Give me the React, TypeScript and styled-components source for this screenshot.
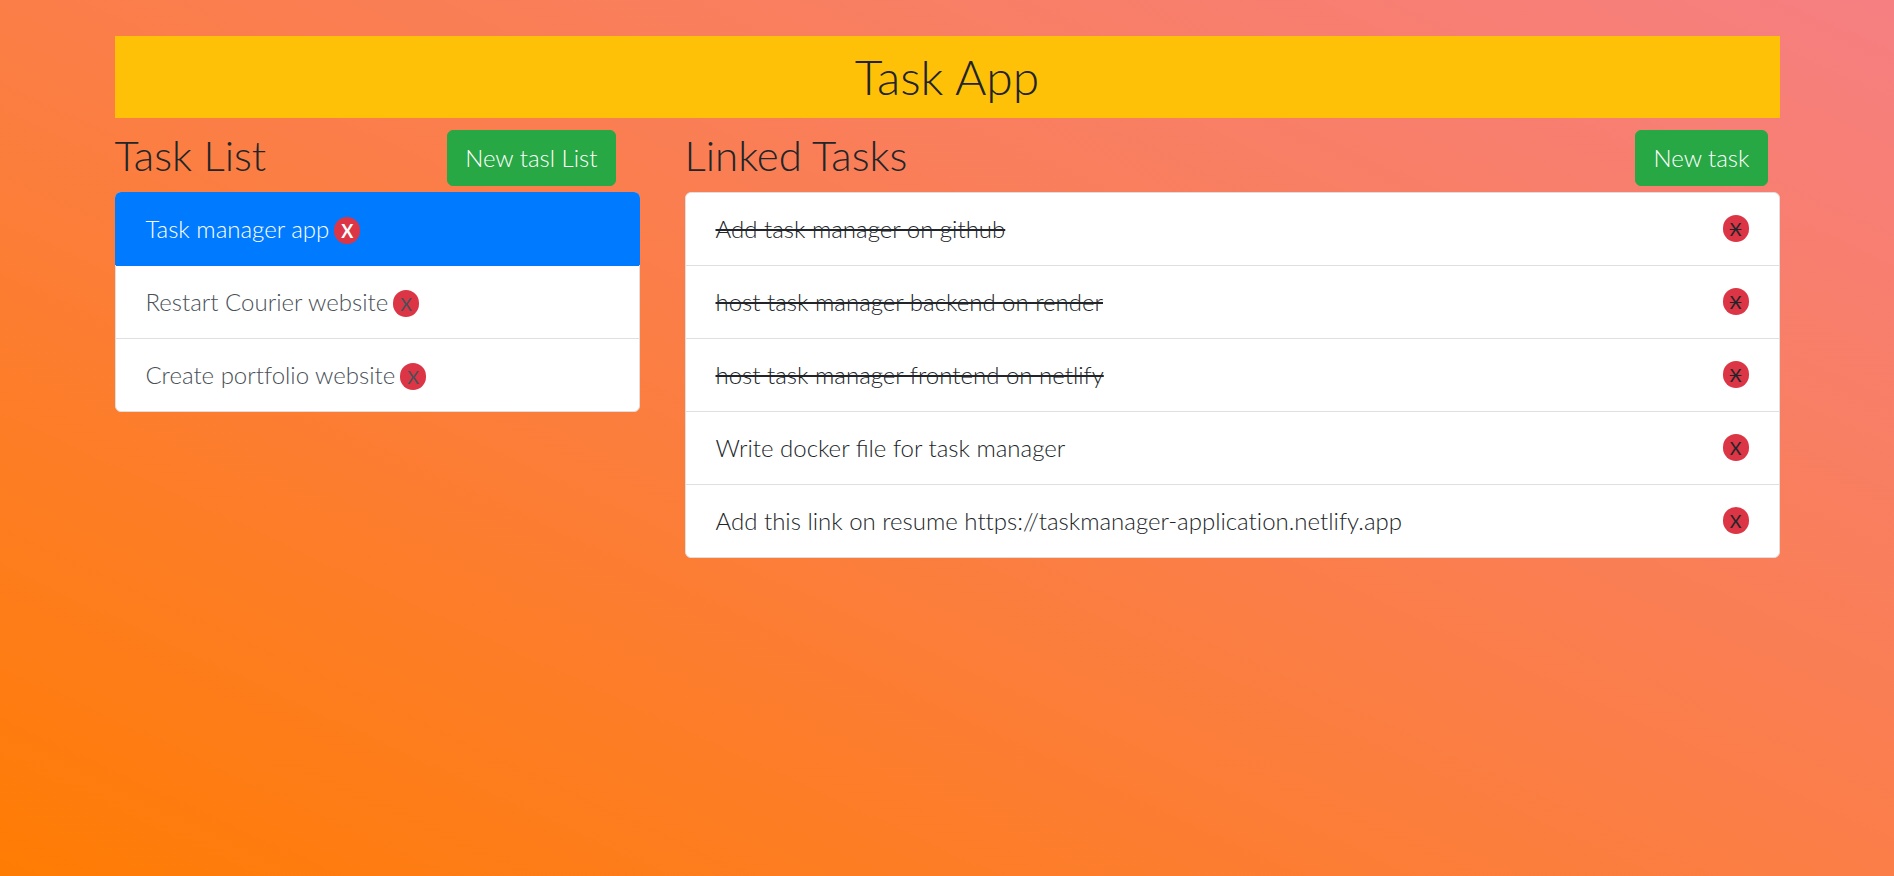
import React from "react";
import styled, { createGlobalStyle, css } from "styled-components";

const GlobalStyle = createGlobalStyle`
  *, *::before, *::after {
    box-sizing: border-box;
  }
  body {
    margin: 0;
    min-height: 100vh;
    background: linear-gradient(to right top, #ff7c03, #fb7e48, #f67f82) no-repeat;
    color: #212529;
    font-family: Lato, "Liberation Sans", sans-serif;
    font-size: 24px;
    font-weight: 300;
    line-height: 36px;
  }
`;

const Page = styled.main`
  max-width: 1709px;
  margin: 0 auto;
  padding: 36px 22px 0;
`;

const Banner = styled.header`
  padding: 12px;
  background: #ffc107;
  text-align: center;
`;

const Title = styled.h1`
  margin: 0;
  font-size: 48px;
  font-weight: 300;
  line-height: 58px;
`;

const Columns = styled.div`
  display: grid;
  grid-template-columns: repeat(12, minmax(0, 1fr));
  column-gap: 45px;
`;

const Panel = styled.section<{ $span: number }>`
  grid-column: span ${(p) => p.$span};
`;

const PanelHeader = styled.div<{ $inset: number }>`
  display: flex;
  align-items: flex-start;
  justify-content: space-between;
  padding: 12px ${(p) => p.$inset}px 6px 0;
`;

const PanelTitle = styled.h2`
  margin: 0;
  font-size: 42px;
  font-weight: 300;
  line-height: 50px;
`;

const AddButton = styled.button`
  padding: 9px 17px;
  border: 1px solid #28a745;
  border-radius: 6px;
  background: #28a745;
  color: #fff;
  font: inherit;
  cursor: pointer;
`;

const List = styled.ul`
  margin: 0;
  padding: 0;
  list-style: none;
  background: #fff;
  border: 1px solid #dfdfdf;
  border-radius: 6px;
`;

const rowBox = css`
  display: flex;
  padding: 18px 30px;
`;

const ListRow = styled.li<{ $active: boolean }>`
  ${rowBox}
  align-items: baseline;
  gap: 5px;
  color: #495057;

  & + & {
    border-top: 1px solid #dfdfdf;
  }

  ${(p) =>
    p.$active &&
    css`
      margin: -1px -1px 0;
      padding: 19px 31px 18px;
      border-radius: 6px 6px 0 0;
      background: #007bff;
      color: #fff;

      && + li {
        border-top-color: #007bff;
      }
    `}
`;

const TaskRow = styled.li`
  ${rowBox}
  align-items: flex-start;
  justify-content: space-between;

  & + & {
    border-top: 1px solid #dfdfdf;
  }
`;

const TaskText = styled.span<{ $done: boolean; $hasUrl: boolean }>`
  text-decoration: ${(p) => (p.$done ? "line-through" : "none")};
  font-variant-ligatures: ${(p) => (p.$hasUrl ? "none" : "normal")};
`;

const ListLink = styled.a`
  color: inherit;
  text-decoration: none;
  font-variant-ligatures: none;
`;

const RemoveButton = styled.button<{ $bold?: boolean; $done?: boolean }>`
  margin: 4px 0 0;
  padding: 5px 7px 4px;
  border: 0;
  border-radius: 15px;
  background: #dc3545;
  color: inherit;
  font-family: inherit;
  font-size: 18px;
  font-weight: ${(p) => (p.$bold ? 700 : 400)};
  line-height: 18px;
  text-decoration: ${(p) => (p.$done ? "line-through" : "none")};
  cursor: pointer;
`;

const taskLists = [
  { name: "Task manager app", active: true },
  { name: "Restart Courier website", active: false },
  { name: "Create portfolio website", active: false },
];

const tasks = [
  { text: "Add task manager on github", done: true },
  { text: "host task manager backend on render", done: true },
  { text: "host task manager frontend on netlify", done: true },
  { text: "Write docker file for task manager", done: false },
  {
    text: "Add this link on resume https://taskmanager-application.netlify.app",
    done: false,
  },
];

export default function App() {
  return (
    <>
      <GlobalStyle />
      <Page>
        <Banner>
          <Title>Task App</Title>
        </Banner>
        <Columns>
          <Panel $span={4}>
            <PanelHeader $inset={24}>
              <PanelTitle>Task List</PanelTitle>
              <AddButton type="button">New tasl List</AddButton>
            </PanelHeader>
            <List>
              {taskLists.map((list) => (
                <ListRow key={list.name} $active={list.active}>
                  <ListLink href="#">{list.name}</ListLink>
                  <RemoveButton type="button" $bold={list.active}>
                    X
                  </RemoveButton>
                </ListRow>
              ))}
            </List>
          </Panel>
          <Panel $span={8}>
            <PanelHeader $inset={12}>
              <PanelTitle>Linked Tasks</PanelTitle>
              <AddButton type="button">New task</AddButton>
            </PanelHeader>
            <List>
              {tasks.map((task) => (
                <TaskRow key={task.text}>
                  <TaskText $done={task.done} $hasUrl={task.text.includes("://")}>
                    {task.text}
                  </TaskText>
                  <RemoveButton type="button" $done={task.done}>
                    X
                  </RemoveButton>
                </TaskRow>
              ))}
            </List>
          </Panel>
        </Columns>
      </Page>
    </>
  );
}
